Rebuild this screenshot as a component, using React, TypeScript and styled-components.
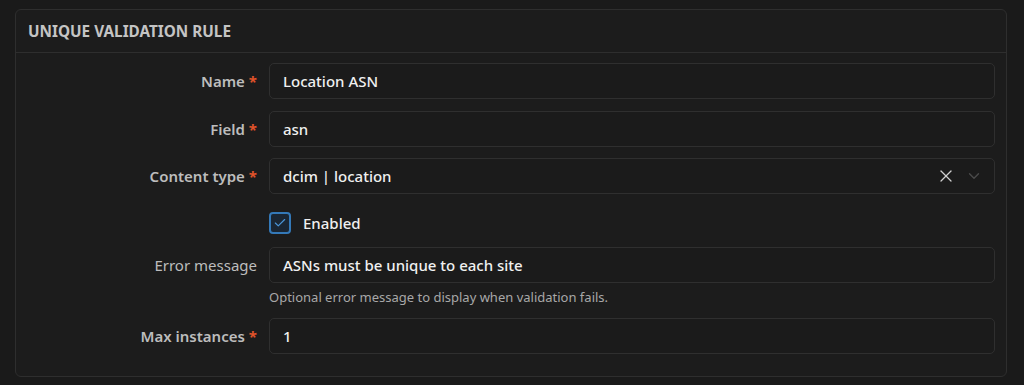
import styled, { createGlobalStyle } from 'styled-components';
import { X, ChevronDown, Check } from 'lucide-react';

const GlobalStyle = createGlobalStyle`
  html, body {
    margin: 0;
    background: #1a1a1a;
  }
  body {
    font-family: 'Noto Sans', 'Open Sans', sans-serif;
    color: #e6e6e6;
  }
`;

const Page = styled.div`
  padding: 9px 17px 8px 15px;
`;

const Card = styled.section`
  background: #1c1c1c;
  border: 1px solid #2e2e2e;
  border-radius: 6px;
`;

const CardHeader = styled.header`
  height: 42px;
  display: flex;
  align-items: center;
  padding: 0 12px;
  border-bottom: 1px solid #2e2e2e;
  font-size: 15.3px;
  font-weight: 700;
  color: #c4c4c4;
  text-transform: uppercase;
`;

const CardBody = styled.div`
  padding: 10px 11px 22px 0;
  display: flex;
  flex-direction: column;
`;

const Row = styled.div<{ $top?: number }>`
  display: grid;
  grid-template-columns: 241px 1fr;
  column-gap: 12px;
  align-items: center;
  margin-top: ${({ $top }) => $top ?? 0}px;
`;

const Label = styled.label<{ $required?: boolean }>`
  text-align: right;
  font-size: 15px;
  font-weight: ${({ $required }) => ($required ? 600 : 400)};
  color: #bdbdbd;
`;

const Star = styled.span`
  color: #e0532a;
  margin-left: 4px;
  font-weight: 700;
`;

const Input = styled.div`
  height: 36px;
  box-sizing: border-box;
  display: flex;
  align-items: center;
  padding: 0 13px;
  background: #1b1b1b;
  border: 1px solid #2f2f2f;
  border-radius: 5px;
  font-size: 15px;
  font-weight: 500;
  color: #f0f0f0;
`;

const Value = styled.span`
  flex: 1;
`;

const SelectIcons = styled.div`
  display: flex;
  align-items: center;
  gap: 9px;
  margin-right: -2px;
`;

const CheckLabel = styled.label`
  grid-column: 2;
  display: flex;
  align-items: center;
  gap: 12px;
  font-size: 15px;
  font-weight: 500;
  color: #f0f0f0;
`;

const CheckBox = styled.span`
  width: 22px;
  height: 22px;
  box-sizing: border-box;
  border: 2px solid #3479b8;
  border-radius: 4px;
  background: #1a2633;
  display: flex;
  align-items: center;
  justify-content: center;
  color: #4a95d8;
`;

const HelpText = styled.div`
  grid-column: 2;
  font-size: 13px;
  line-height: 16px;
  color: #a8a8a8;
`;

export default function App() {
  return (
    <Page>
      <GlobalStyle />
      <Card>
        <CardHeader>Unique Validation Rule</CardHeader>
        <CardBody>
          <Row>
            <Label $required>
              Name<Star>*</Star>
            </Label>
            <Input>Location ASN</Input>
          </Row>
          <Row $top={12}>
            <Label $required>
              Field<Star>*</Star>
            </Label>
            <Input>asn</Input>
          </Row>
          <Row $top={11}>
            <Label $required>
              Content type<Star>*</Star>
            </Label>
            <Input>
              <Value>dcim | location</Value>
              <SelectIcons>
                <X size={20} color="#d0d0d0" strokeWidth={1.5} />
                <ChevronDown size={18} color="#4a4a4a" strokeWidth={1.8} />
              </SelectIcons>
            </Input>
          </Row>
          <Row $top={18}>
            <CheckLabel>
              <CheckBox>
                <Check size={14} strokeWidth={2} />
              </CheckBox>
              Enabled
            </CheckLabel>
          </Row>
          <Row $top={13}>
            <Label>Error message</Label>
            <Input>ASNs must be unique to each site</Input>
          </Row>
          <Row $top={6}>
            <HelpText>Optional error message to display when validation fails.</HelpText>
          </Row>
          <Row $top={13}>
            <Label $required>
              Max instances<Star>*</Star>
            </Label>
            <Input>1</Input>
          </Row>
        </CardBody>
      </Card>
    </Page>
  );
}
